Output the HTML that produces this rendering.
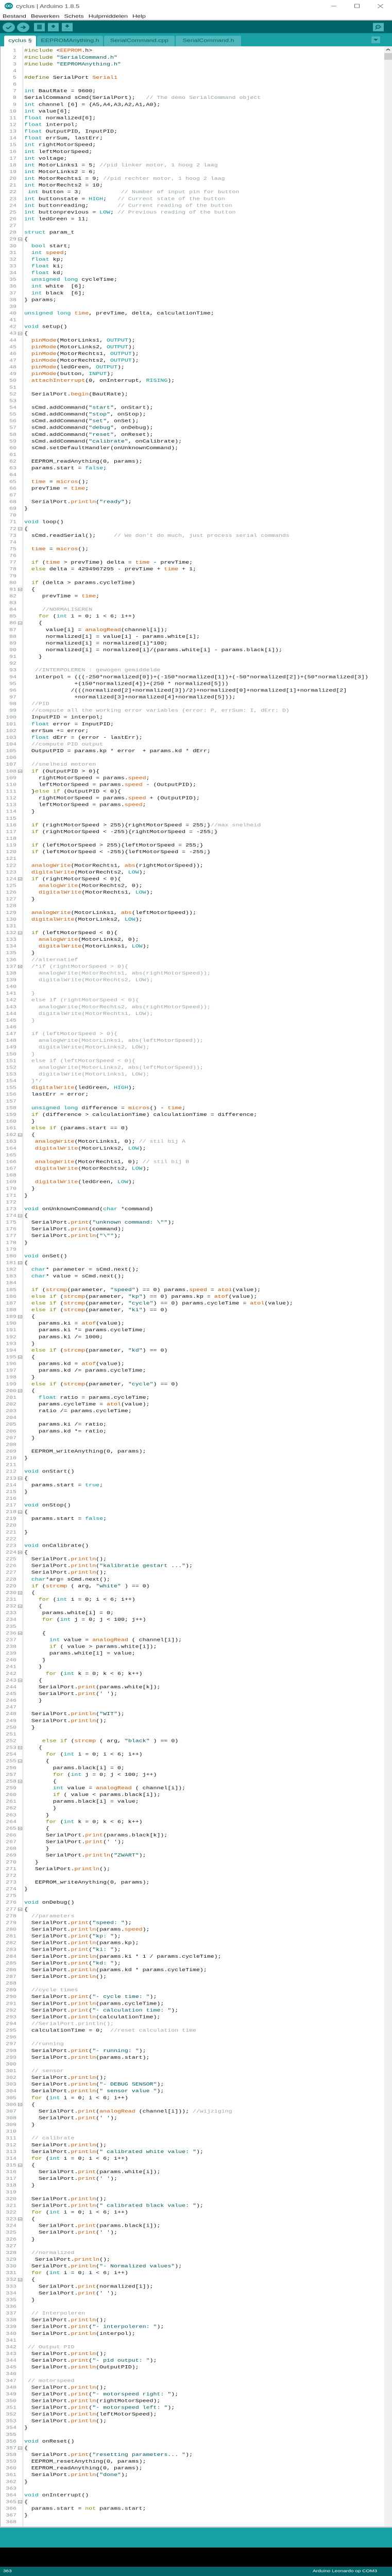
<!DOCTYPE html>
<html><head><meta charset="utf-8">
<meta name="viewport" content="width=761, initial-scale=1">
<style>
*{margin:0;padding:0;box-sizing:border-box}
html{-webkit-text-size-adjust:none;text-size-adjust:none}
html,body{width:100%;height:100%;overflow:hidden;background:#fff;font-family:"Liberation Sans",sans-serif}
#root{position:absolute;left:0;top:0;width:761px;height:6503px;overflow:hidden;transform-origin:0 0;background:#fff}
.abs{position:absolute}
#title{left:0;top:0;width:761px;height:50px;background:#fff}
#ttl{left:31px;top:8px;font-size:13px;line-height:16px;color:#555}
#menu{left:5px;top:34px;font-size:12.5px;line-height:15px;color:#222}
#menu span{margin-right:9px}
#sep{left:0;top:50px;width:761px;height:2px;background:#aaa}
#tool{left:0;top:52px;width:761px;height:32px;background:#006468}
.cb{width:24px;height:24px;border-radius:50%;background:#4db7bb;top:5px}
.sb{width:21px;height:21px;background:#4db7bb;top:6px}
#tabs{left:0;top:84px;width:761px;height:33px;background:#17a1a5}
.tab{top:6px;height:27px;background:#4db7bb;border-radius:3px 3px 0 0;font-size:12.5px;color:#006468;line-height:24px;text-align:center}
#ed{left:0;top:117px;width:746px;height:6261px;background:#fff;overflow:hidden;border-left:1px solid #aaa}
#gut{position:absolute;left:0;top:3px;width:31px;text-align:right;font-family:"Liberation Mono",monospace;font-size:11.6px;line-height:17px;color:#8a9696;white-space:pre}
#gl{position:absolute;left:43px;top:0;width:1px;height:6261px;background:#d6d6d6}
#src{position:absolute;left:46px;top:3px;width:700px;height:6258px;overflow:hidden;font-family:"Liberation Mono",monospace;font-size:11.6px;line-height:17px;color:#111;white-space:pre}
.fold{position:absolute;left:34px;width:8px;height:8px;border:1px solid #888;background:#fff}
.fold:after{content:"";position:absolute;left:1px;top:2.5px;width:4px;height:1px;background:#666}
ty{color:#00979c}kw{color:#728e00}fn{color:#d35400}st{color:#005c5f}cm{color:#95a5a6}pp{color:#5e6d03}
#scroll{left:746px;top:117px;width:15px;height:6261px;background:#f0f0f0}
#bot1{left:0;top:6378px;width:761px;height:3px;background:#c8c8c8}
#bot2{left:0;top:6381px;width:761px;height:50px;background:#17a1a5}
#bot3{left:0;top:6431px;width:761px;height:49px;background:#000}
#stat{left:0;top:6480px;width:761px;height:23px;background:#006468;color:#fff;font-size:10px;line-height:12px}
</style></head><body>
<div id="root">
<div id="title" class="abs">
 <svg class="abs" style="left:9px;top:7px" width="16" height="16" viewBox="0 0 16 16"><circle cx="8" cy="8" r="8" fill="#00878f"/><circle cx="5.2" cy="8" r="2.6" fill="none" stroke="#fff" stroke-width="1.3"/><circle cx="10.8" cy="8" r="2.6" fill="none" stroke="#fff" stroke-width="1.3"/></svg>
 <div id="ttl" class="abs">cyclus | Arduino 1.8.5</div>
 <div id="menu" class="abs"><span>Bestand</span><span>Bewerken</span><span>Schets</span><span>Hulpmiddelen</span><span>Help</span></div>
 <div class="abs" style="left:643px;top:15px;width:10px;height:1px;background:#666"></div>
 <div class="abs" style="left:688px;top:10px;width:10px;height:10px;border:1px solid #666"></div>
 <svg class="abs" style="left:733px;top:10px" width="11" height="11"><path d="M0 0L11 11M11 0L0 11" stroke="#666" stroke-width="1"/></svg>
</div>
<div id="sep" class="abs"></div>
<div id="tool" class="abs">
 <div class="abs cb" style="left:5px"></div>
 <svg class="abs" style="left:11px;top:12px" width="12" height="10"><path d="M1 5L4.5 8.5L11 1.5" stroke="#006468" stroke-width="2.2" fill="none"/></svg>
 <div class="abs cb" style="left:33px"></div>
 <svg class="abs" style="left:39px;top:11px" width="12" height="12"><path d="M1 6H10M6 2L10 6L6 10" stroke="#006468" stroke-width="2.2" fill="none"/></svg>
 <div class="abs sb" style="left:66px"></div>
 <div class="abs" style="left:72px;top:10px;width:9px;height:12px;background:#006468;opacity:.8"></div>
 <div class="abs sb" style="left:93px"></div>
 <svg class="abs" style="left:97px;top:9px" width="13" height="14"><path d="M6.5 1L11 6H8.5V9H4.5V6H2Z" fill="#006468"/><path d="M1 12.5H12" stroke="#006468" stroke-dasharray="1 1"/></svg>
 <div class="abs sb" style="left:120px"></div>
 <svg class="abs" style="left:124px;top:9px" width="13" height="14"><path d="M4.5 1H8.5V4H11L6.5 9L2 4H4.5Z" fill="#006468"/><path d="M1 12.5H12" stroke="#006468" stroke-dasharray="1 1"/></svg>
 <div class="abs sb" style="left:724px;top:6px"></div>
 <svg class="abs" style="left:726px;top:8px" width="18" height="17"><circle cx="8" cy="7.5" r="4" fill="none" stroke="#006468" stroke-width="1.8"/><circle cx="8" cy="7.5" r="1" fill="#006468"/><path d="M5 11L3 14" stroke="#006468" stroke-width="1.8"/><path d="M13 8H17" stroke="#006468" stroke-dasharray="1 1"/></svg>
</div>
<div id="tabs" class="abs">
 <div class="abs tab" style="left:8px;width:62px;background:#fff;color:#0b4e52">cyclus §</div>
 <div class="abs tab" style="left:72px;width:128px">EEPROMAnything.h</div>
 <div class="abs tab" style="left:202px;width:137px">SerialCommand.cpp</div>
 <div class="abs tab" style="left:341px;width:127px">SerialCommand.h</div>
 <div class="abs" style="left:721px;top:8px;width:17px;height:17px;background:#4db7bb"></div>
 <svg class="abs" style="left:725px;top:14px" width="9" height="5"><path d="M0 0H9L4.5 5Z" fill="#006468"/></svg>
</div>
<div id="ed" class="abs">
<div id="gut"></div>
<div id="gl"></div>
<div class="fold" style="top:483px"></div><div class="fold" style="top:721px"></div><div class="fold" style="top:1214px"></div><div class="fold" style="top:1367px"></div><div class="fold" style="top:1452px"></div><div class="fold" style="top:1826px"></div><div class="fold" style="top:2098px"></div><div class="fold" style="top:2234px"></div><div class="fold" style="top:2319px"></div><div class="fold" style="top:2744px"></div><div class="fold" style="top:2948px"></div><div class="fold" style="top:3067px"></div><div class="fold" style="top:3203px"></div><div class="fold" style="top:3305px"></div><div class="fold" style="top:3390px"></div><div class="fold" style="top:3611px"></div><div class="fold" style="top:3696px"></div><div class="fold" style="top:3798px"></div><div class="fold" style="top:3900px"></div><div class="fold" style="top:3934px"></div><div class="fold" style="top:4002px"></div><div class="fold" style="top:4121px"></div><div class="fold" style="top:4291px"></div><div class="fold" style="top:4325px"></div><div class="fold" style="top:4376px"></div><div class="fold" style="top:4495px"></div><div class="fold" style="top:4699px"></div><div class="fold" style="top:5192px"></div><div class="fold" style="top:5345px"></div><div class="fold" style="top:5481px"></div><div class="fold" style="top:5634px"></div><div class="fold" style="top:6059px"></div><div class="fold" style="top:6195px"></div>
<div id="src"><pp>#include</pp> &lt;<fn>EEPROM</fn>.h&gt;
<pp>#include</pp> <st>"SerialCommand.h"</st>
<pp>#include</pp> <st>"EEPROMAnything.h"</st>

<pp>#define</pp> SerialPort <fn>Serial1</fn>

<ty>int</ty> BautRate = 9600;
SerialCommand sCmd(SerialPort);   <cm>// The demo SerialCommand object</cm>
<ty>int</ty> channel [6] = {A5,A4,A3,A2,A1,A0};
<ty>int</ty> value[6];
<ty>float</ty> normalized[6];
<ty>float</ty> interpol;
<ty>float</ty> OutputPID, InputPID;
<ty>float</ty> errSum, lastErr;
<ty>int</ty> rightMotorSpeed;
<ty>int</ty> leftMotorSpeed;
<ty>int</ty> voltage;
<ty>int</ty> MotorLinks1 = 5; <cm>//pid linker motor, 1 hoog 2 laag</cm>
<ty>int</ty> MotorLinks2 = 6;
<ty>int</ty> MotorRechts1 = 9; <cm>//pid rechter motor, 1 hoog 2 laag</cm>
<ty>int</ty> MotorRechts2 = 10;
 <ty>int</ty> button = 3;           <cm>// Number of input pin for button</cm>
<ty>int</ty> buttonstate = <ty>HIGH</ty>;   <cm>// Current state of the button</cm>
<ty>int</ty> buttonreading;        <cm>// Current reading of the button</cm>
<ty>int</ty> buttonprevious = <ty>LOW</ty>; <cm>// Previous reading of the button</cm>
<ty>int</ty> ledGreen = 11;

<ty>struct</ty> param_t
{
  <ty>bool</ty> start;
  <ty>int</ty> <fn>speed</fn>;
  <ty>float</ty> kp;
  <ty>float</ty> ki;
  <ty>float</ty> kd;
  <ty>unsigned</ty> <ty>long</ty> cycleTime;
  <ty>int</ty> white  [6];
  <ty>int</ty> black  [6];
} params;

<ty>unsigned</ty> <ty>long</ty> <fn>time</fn>, prevTime, delta, calculationTime;

<ty>void</ty> setup()
{
  <fn>pinMode</fn>(MotorLinks1, <ty>OUTPUT</ty>);
  <fn>pinMode</fn>(MotorLinks2, <ty>OUTPUT</ty>);
  <fn>pinMode</fn>(MotorRechts1, <ty>OUTPUT</ty>);
  <fn>pinMode</fn>(MotorRechts2, <ty>OUTPUT</ty>);
  <fn>pinMode</fn>(ledGreen, <ty>OUTPUT</ty>);
  <fn>pinMode</fn>(button, <ty>INPUT</ty>);
  <fn>attachInterrupt</fn>(0, onInterrupt, <ty>RISING</ty>);

  SerialPort.<fn>begin</fn>(BautRate);

  sCmd.addCommand(<st>"start"</st>, onStart);
  sCmd.addCommand(<st>"stop"</st>, onStop);
  sCmd.addCommand(<st>"set"</st>, onSet);
  sCmd.addCommand(<st>"debug"</st>, onDebug);
  sCmd.addCommand(<st>"reset"</st>, onReset);
  sCmd.addCommand(<st>"calibrate"</st>, onCalibrate);
  sCmd.setDefaultHandler(onUnknownCommand);

  EEPROM_readAnything(0, params);
  params.start = <ty>false</ty>;

  <fn>time</fn> = <fn>micros</fn>();
  prevTime = <fn>time</fn>;

  SerialPort.<fn>println</fn>(<st>"ready"</st>);
}

<ty>void</ty> loop()
{
  sCmd.readSerial();     <cm>// We don't do much, just process serial commands</cm>

  <fn>time</fn> = <fn>micros</fn>();

  <kw>if</kw> (<fn>time</fn> &gt; prevTime) delta = <fn>time</fn> - prevTime;
  <kw>else</kw> delta = 4294967295 - prevTime + <fn>time</fn> + 1;

  <kw>if</kw> (delta &gt; params.cycleTime)
  {
     prevTime = <fn>time</fn>;

     <cm>//NORMALISEREN</cm>
    <kw>for</kw> (<ty>int</ty> i = 0; i &lt; 6; i++)
    {
      value[i] = <fn>analogRead</fn>(channel[i]);
      normalized[i] = value[i] - params.white[i];
      normalized[i] = normalized[i]*100;
      normalized[i] = normalized[i]/(params.white[i] - params.black[i]);
    }

   <cm>//INTERPOLEREN : gewogen gemiddelde</cm>
   interpol = (((-250*normalized[0])+(-150*normalized[1])+(-50*normalized[2])+(50*normalized[3])
              +(150*normalized[4])+(250 * normalized[5]))
             /(((normalized[2]+normalized[3])/2)+normalized[0]+normalized[1]+normalized[2]
              +normalized[3]+normalized[4]+normalized[5]));
  <cm>//PID</cm>
  <cm>//compute all the working error variables (error: P, errSum: I, dErr: D)</cm>
  InputPID = interpol;
  <ty>float</ty> error = InputPID;
  errSum += error;
  <ty>float</ty> dErr = (error - lastErr);
  <cm>//compute PID output</cm>
  OutputPID = params.kp * error  + params.kd * dErr;

  <cm>//snelheid motoren</cm>
  <kw>if</kw> (OutputPID &gt; 0){
    rightMotorSpeed = params.<fn>speed</fn>;
    leftMotorSpeed = params.<fn>speed</fn> - (OutputPID);
  }<kw>else</kw> <kw>if</kw> (OutputPID &lt; 0){
    rightMotorSpeed = params.<fn>speed</fn> + (OutputPID);
    leftMotorSpeed = params.<fn>speed</fn>;
  }

  <kw>if</kw> (rightMotorSpeed &gt; 255){rightMotorSpeed = 255;}<cm>//max snelheid</cm>
  <kw>if</kw> (rightMotorSpeed &lt; -255){rightMotorSpeed = -255;}

  <kw>if</kw> (leftMotorSpeed &gt; 255){leftMotorSpeed = 255;}
  <kw>if</kw> (leftMotorSpeed &lt; -255){leftMotorSpeed = -255;}

  <fn>analogWrite</fn>(MotorRechts1, <fn>abs</fn>(rightMotorSpeed));
  <fn>digitalWrite</fn>(MotorRechts2, <ty>LOW</ty>);
  <kw>if</kw> (rightMotorSpeed &lt; 0){
    <fn>analogWrite</fn>(MotorRechts2, 0);
    <fn>digitalWrite</fn>(MotorRechts1, <ty>LOW</ty>);
  }

  <fn>analogWrite</fn>(MotorLinks1, <fn>abs</fn>(leftMotorSpeed));
  <fn>digitalWrite</fn>(MotorLinks2, <ty>LOW</ty>);

  <kw>if</kw> (leftMotorSpeed &lt; 0){
    <fn>analogWrite</fn>(MotorLinks2, 0);
    <fn>digitalWrite</fn>(MotorLinks1, <ty>LOW</ty>);
  }
  <cm>//alternatief</cm>
<cm>  /*if (rightMotorSpeed &gt; 0){
    analogWrite(MotorRechts1, abs(rightMotorSpeed));
    digitalWrite(MotorRechts2, LOW);

  }
  else if (rightMotorSpeed &lt; 0){
    analogWrite(MotorRechts2, abs(rightMotorSpeed));
    digitalWrite(MotorRechts1, LOW);
  }

  if (leftMotorSpeed &gt; 0){
    analogWrite(MotorLinks1, abs(leftMotorSpeed));
    digitalWrite(MotorLinks2, LOW);
  }
  else if (leftMotorSpeed &lt; 0){
    analogWrite(MotorLinks2, abs(leftMotorSpeed));
    digitalWrite(MotorLinks1, LOW);
  }*/</cm>
  <fn>digitalWrite</fn>(ledGreen, <ty>HIGH</ty>);
  lastErr = error;

  <ty>unsigned</ty> <ty>long</ty> difference = <fn>micros</fn>() - <fn>time</fn>;
  <kw>if</kw> (difference &gt; calculationTime) calculationTime = difference;
  }
  <kw>else</kw> <kw>if</kw> (params.start == 0)
  {
   <fn>analogWrite</fn>(MotorLinks1, 0); <cm>// stil bij A</cm>
   <fn>digitalWrite</fn>(MotorLinks2, <ty>LOW</ty>);

   <fn>analogWrite</fn>(MotorRechts1, 0); <cm>// stil bij B</cm>
   <fn>digitalWrite</fn>(MotorRechts2, <ty>LOW</ty>);

   <fn>digitalWrite</fn>(ledGreen, <ty>LOW</ty>);
  }
}

<ty>void</ty> onUnknownCommand(<ty>char</ty> *command)
{
  SerialPort.<fn>print</fn>(<st>"unknown command: \""</st>);
  SerialPort.<fn>print</fn>(command);
  SerialPort.<fn>println</fn>(<st>"\""</st>);
}

<ty>void</ty> onSet()
{
  <ty>char</ty>* parameter = sCmd.next();
  <ty>char</ty>* value = sCmd.next();

  <kw>if</kw> (<fn>strcmp</fn>(parameter, <st>"speed"</st>) == 0) params.<fn>speed</fn> = <fn>atoi</fn>(value);
  <kw>else</kw> <kw>if</kw> (<fn>strcmp</fn>(parameter, <st>"kp"</st>) == 0) params.kp = <fn>atof</fn>(value);
  <kw>else</kw> <kw>if</kw> (<fn>strcmp</fn>(parameter, <st>"cycle"</st>) == 0) params.cycleTime = <fn>atol</fn>(value);
  <kw>else</kw> <kw>if</kw> (<fn>strcmp</fn>(parameter, <st>"ki"</st>) == 0)
  {
    params.ki = <fn>atof</fn>(value);
    params.ki *= params.cycleTime;
    params.ki /= 1000;
  }
  <kw>else</kw> <kw>if</kw> (<fn>strcmp</fn>(parameter, <st>"kd"</st>) == 0)
  {
    params.kd = <fn>atof</fn>(value);
    params.kd /= params.cycleTime;
  }
  <kw>else</kw> <kw>if</kw> (<fn>strcmp</fn>(parameter, <st>"cycle"</st>) == 0)
  {
    <ty>float</ty> ratio = params.cycleTime;
    params.cycleTime = <fn>atol</fn>(value);
    ratio /= params.cycleTime;

    params.ki /= ratio;
    params.kd *= ratio;
  }

  EEPROM_writeAnything(0, params);
}

<ty>void</ty> onStart()
{
  params.start = <ty>true</ty>;
}

<ty>void</ty> onStop()
{
  params.start = <ty>false</ty>;

}

<ty>void</ty> onCalibrate()
{
  SerialPort.<fn>println</fn>();
  SerialPort.<fn>println</fn>(<st>"kalibratie gestart ..."</st>);
  SerialPort.<fn>println</fn>();
  <ty>char</ty>*arg= sCmd.next();
  <kw>if</kw> (<fn>strcmp</fn> ( arg, <st>"white"</st> ) == 0)
  {
    <kw>for</kw> (<ty>int</ty> i = 0; i &lt; 6; i++)
    {
     params.white[i] = 0;
     <kw>for</kw> (<ty>int</ty> j = 0; j &lt; 100; j++)

     {
       <ty>int</ty> value = <fn>analogRead</fn> ( channel[i]);
       <kw>if</kw> ( value &gt; params.white[i]);
       params.white[i] = value;
     }
    }
      <kw>for</kw> (<ty>int</ty> k = 0; k &lt; 6; k++)
    {
    SerialPort.<fn>print</fn>(params.white[k]);
    SerialPort.<fn>print</fn>(<st>' '</st>);
    }

  SerialPort.<fn>println</fn>(<st>"WIT"</st>);
  SerialPort.<fn>println</fn>();
  }

     <kw>else</kw> <kw>if</kw> (<fn>strcmp</fn> ( arg, <st>"black"</st> ) == 0)
    {
      <kw>for</kw> (<ty>int</ty> i = 0; i &lt; 6; i++)
      {
        params.black[i] = 0;
        <kw>for</kw> (<ty>int</ty> j = 0; j &lt; 100; j++)
        {
        <ty>int</ty> value = <fn>analogRead</fn> ( channel[i]);
        <kw>if</kw> ( value &lt; params.black[i]);
        params.black[i] = value;
        }
      }
      <kw>for</kw> (<ty>int</ty> k = 0; k &lt; 6; k++)
      {
      SerialPort.<fn>print</fn>(params.black[k]);
      SerialPort.<fn>print</fn>(<st>' '</st>);
      }
      SerialPort.<fn>println</fn>(<st>"ZWART"</st>);
   }
   SerialPort.<fn>println</fn>();

   EEPROM_writeAnything(0, params);
}

<ty>void</ty> onDebug()
{
  <cm>//parameters</cm>
  SerialPort.<fn>print</fn>(<st>"speed: "</st>);
  SerialPort.<fn>println</fn>(params.<fn>speed</fn>);
  SerialPort.<fn>print</fn>(<st>"kp: "</st>);
  SerialPort.<fn>println</fn>(params.kp);
  SerialPort.<fn>print</fn>(<st>"ki: "</st>);
  SerialPort.<fn>println</fn>(params.ki * 1 / params.cycleTime);
  SerialPort.<fn>print</fn>(<st>"kd: "</st>);
  SerialPort.<fn>println</fn>(params.kd * params.cycleTime);
  SerialPort.<fn>println</fn>();

  <cm>//cycle times</cm>
  SerialPort.<fn>print</fn>(<st>"- cycle time: "</st>);
  SerialPort.<fn>println</fn>(params.cycleTime);
  SerialPort.<fn>print</fn>(<st>"- calculation time: "</st>);
  SerialPort.<fn>println</fn>(calculationTime);
  <cm>//SerialPort.println();</cm>
  calculationTime = 0;  <cm>//reset calculation time</cm>

  <cm>//running</cm>
  SerialPort.<fn>print</fn>(<st>"- running: "</st>);
  SerialPort.<fn>println</fn>(params.start);

  <cm>// sensor</cm>
  SerialPort.<fn>println</fn>();
  SerialPort.<fn>println</fn>(<st>"- DEBUG SENSOR"</st>);
  SerialPort.<fn>println</fn>(<st>" sensor value "</st>);
  <kw>for</kw> (<ty>int</ty> i = 0; i &lt; 6; i++)
  {
    SerialPort.<fn>print</fn>(<fn>analogRead</fn> (channel[i])); <cm>//wijziging</cm>
    SerialPort.<fn>print</fn>(<st>' '</st>);
  }

  <cm>// calibrate</cm>
  SerialPort.<fn>println</fn>();
  SerialPort.<fn>println</fn>(<st>" calibrated white value: "</st>);
  <kw>for</kw> (<ty>int</ty> i = 0; i &lt; 6; i++)
  {
    SerialPort.<fn>print</fn>(params.white[i]);
    SerialPort.<fn>print</fn>(<st>' '</st>);
  }

  SerialPort.<fn>println</fn>();
  SerialPort.<fn>println</fn>(<st>" calibrated black value: "</st>);
  <kw>for</kw> (<ty>int</ty> i = 0; i &lt; 6; i++)
  {
    SerialPort.<fn>print</fn>(params.black[i]);
    SerialPort.<fn>print</fn>(<st>' '</st>);
  }

  <cm>//normalized</cm>
   SerialPort.<fn>println</fn>();
  SerialPort.<fn>println</fn>(<st>"- Normalized values"</st>);
  <kw>for</kw> (<ty>int</ty> i = 0; i &lt; 6; i++)
  {
    SerialPort.<fn>print</fn>(normalized[i]);
    SerialPort.<fn>print</fn>(<st>' '</st>);
  }

  <cm>// Interpoleren</cm>
  SerialPort.<fn>println</fn>();
  SerialPort.<fn>print</fn>(<st>"- interpoleren: "</st>);
  SerialPort.<fn>println</fn>(interpol);

 <cm>// Output PID</cm>
  SerialPort.<fn>println</fn>();
  SerialPort.<fn>print</fn>(<st>"- pid output: "</st>);
  SerialPort.<fn>println</fn>(OutputPID);

 <cm>// motorspeed</cm>
  SerialPort.<fn>println</fn>();
  SerialPort.<fn>print</fn>(<st>"- motorspeed right: "</st>);
  SerialPort.<fn>println</fn>(rightMotorSpeed);
  SerialPort.<fn>print</fn>(<st>"- motorspeed left: "</st>);
  SerialPort.<fn>println</fn>(leftMotorSpeed);
  SerialPort.<fn>println</fn>();
}

<ty>void</ty> onReset()
{
  SerialPort.<fn>print</fn>(<st>"resetting parameters... "</st>);
  EEPROM_resetAnything(0, params);
  EEPROM_readAnything(0, params);
  SerialPort.<fn>println</fn>(<st>"done"</st>);
}

<ty>void</ty> onInterrupt()
{
  params.start = <kw>not</kw> params.start;
}
</div>
</div>
<div id="scroll" class="abs">
 <svg class="abs" style="left:3px;top:5px" width="9" height="6"><path d="M1 5L4.5 1.5L8 5" stroke="#444" stroke-width="1.6" fill="none"/></svg>
 <div class="abs" style="left:0;top:17px;width:15px;height:17px;background:#cdcdcd"></div>
</div>
<div id="bot1" class="abs"></div>
<div id="bot2" class="abs"></div>
<div id="bot3" class="abs"></div>
<div id="stat" class="abs"><span class="abs" style="left:6px;top:5px">363</span><span class="abs" style="left:607px;top:5px">Arduino Leonardo op COM3</span></div>
</div>
<script>
(function(){
var a=[];for(var i=1;i<=368;i++)a.push(i);document.getElementById('gut').textContent=a.join('\n');
var w=window.innerWidth||761,h=window.innerHeight||6503;
var sx=w/761,sy=h/6503;
if(Math.abs(sx-1)>0.01||Math.abs(sy-1)>0.01){document.getElementById('root').style.transform='scale('+sx+','+sy+')';}
})();
</script>
</body></html>
